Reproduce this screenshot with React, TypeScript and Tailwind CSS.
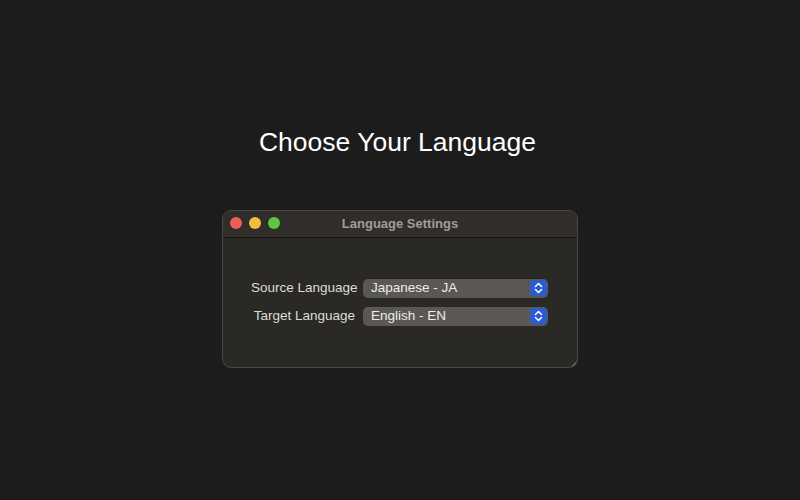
import { useState } from 'react'

const FONT = { fontFamily: '"Liberation Sans", Arial, sans-serif' }

function Stepper() {
  return (
    <div className="flex h-[16px] w-[17px] items-center justify-center rounded-[4px] bg-[#2c5bd6]">
      <svg width="9" height="12" viewBox="0 0 9 12" fill="none" stroke="white" strokeWidth="1.5" strokeLinecap="round" strokeLinejoin="round">
        <path d="M1.5 4.5 L4.5 1.5 L7.5 4.5" />
        <path d="M1.5 7.5 L4.5 10.5 L7.5 7.5" />
      </svg>
    </div>
  )
}

function Popup({ value }: { value: string }) {
  return (
    <div className="flex h-[19px] w-[185px] items-center justify-between rounded-[5px] bg-[#5b5854] pl-[8px] pr-[1px]">
      <span className="whitespace-nowrap text-[13.5px] text-[#ececec]">{value}</span>
      <Stepper />
    </div>
  )
}

export default function App() {
  const [rows] = useState([
    { label: 'Source Language', value: 'Japanese - JA' },
    { label: 'Target Language', value: 'English - EN' },
  ])

  return (
    <div className="flex h-[500px] w-full flex-col items-center bg-[#1c1c1c]" style={FONT}>
      <h1 className="mt-[125px] pr-[5px] text-[26.5px] leading-[34px] text-white">Choose Your Language</h1>

      <div className="mt-[51px] flex h-[158px] w-[356px] flex-col overflow-hidden rounded-[9px] border border-[#4a4845] bg-[#2b2926]">
        <div className="relative flex h-[27px] items-center justify-center border-b border-[#141312] bg-[#302d2a]">
          <div className="absolute left-[7px] top-[6px] flex gap-[7px]">
            <span className="h-[12px] w-[12px] rounded-full bg-[#ec5f57]" />
            <span className="h-[12px] w-[12px] rounded-full bg-[#f3bc3e]" />
            <span className="h-[12px] w-[12px] rounded-full bg-[#5ec544]" />
          </div>
          <span className="text-[13px] font-bold text-[#a09d99]">Language Settings</span>
        </div>

        <div className="relative flex flex-1 flex-col items-center pt-[40px]">
          <div className="flex flex-col gap-[8px] pr-[1px]">
            {rows.map(r => (
              <div key={r.label} className="flex items-center gap-[8px]">
                <span className="w-[104px] whitespace-nowrap text-right text-[13.5px] text-[#dcdcdc]">{r.label}</span>
                <Popup value={r.value} />
              </div>
            ))}
          </div>
          <svg className="absolute bottom-0 right-0" width="6" height="6" viewBox="0 0 6 6">
            <path d="M6 0 L6 6 L0 6 Z" fill="#8a8784" />
          </svg>
        </div>
      </div>
    </div>
  )
}
